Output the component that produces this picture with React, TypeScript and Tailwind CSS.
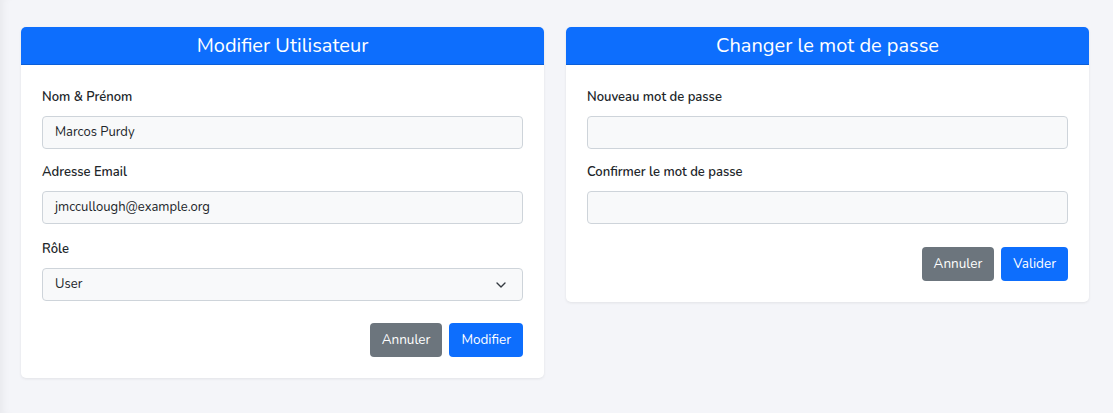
import { ChevronDown } from 'lucide-react';

const font = { fontFamily: 'Nunito, Lato, "Noto Sans", sans-serif' };

const Field = ({ label, value, className = '' }: { label: string; value?: string; className?: string }) => (
    <div className={className}>
        <label className="block text-[13px] leading-[21px] font-semibold text-[#212529] mb-[8px]">{label}</label>
        <div className="h-[33px] flex items-center px-[12px] rounded-[4px] border border-[#ced4da] bg-[#f8f9fa] text-[13px] text-[#212529]">
            {value}
        </div>
    </div>
);

const Card = ({ title, children }: { title: string; children: React.ReactNode }) => (
    <div className="bg-white rounded-[5px] shadow-[0_1px_3px_rgba(0,0,0,0.08)] overflow-hidden">
        <div className="h-[38px] flex items-center justify-center bg-[#0d6efd] border-b border-[#0b5ed7] text-white text-[20px] leading-[24px]">
            {title}
        </div>
        <div className="px-[21px] pt-[22px] pb-[21px]">{children}</div>
    </div>
);

const Buttons = ({ primary, className = '' }: { primary: string; className?: string }) => (
    <div className={`flex justify-end gap-[7px] ${className}`}>
        <button className="h-[34px] px-[12px] rounded-[4px] bg-[#6c757d] text-white text-[13.5px]">Annuler</button>
        <button className="h-[34px] px-[12px] rounded-[4px] bg-[#0d6efd] text-white text-[13.5px]">{primary}</button>
    </div>
);

export default function App() {
    return (
        <div
            className="min-h-screen bg-[#f4f5f9] shadow-[inset_9px_0_8px_-6px_rgba(0,0,0,0.05)] pl-[21px] pr-[24px] pt-[27px]"
            style={font}
        >
            <div className="grid grid-cols-2 gap-[22px] items-start">
                <Card title="Modifier Utilisateur">
                    <Field label="Nom & Prénom" value="Marcos Purdy" className="mb-[13px]" />
                    <Field label="Adresse Email" value="jmccullough@example.org" className="mb-[15px]" />
                    <div>
                        <label className="block text-[13px] leading-[21px] font-semibold text-[#212529] mb-[8px]">Rôle</label>
                        <div className="h-[33px] flex items-center justify-between pl-[12px] pr-[13px] rounded-[4px] border border-[#ced4da] bg-[#f8f9fa] text-[13px] text-[#212529]">
                            <span>User</span>
                            <ChevronDown size={16} strokeWidth={2} className="text-[#343a40]" />
                        </div>
                    </div>
                    <Buttons primary="Modifier" className="mt-[22px]" />
                </Card>
                <Card title="Changer le mot de passe">
                    <Field label="Nouveau mot de passe" className="mb-[13px]" />
                    <Field label="Confirmer le mot de passe" />
                    <Buttons primary="Valider" className="mt-[23px]" />
                </Card>
            </div>
        </div>
    );
}
